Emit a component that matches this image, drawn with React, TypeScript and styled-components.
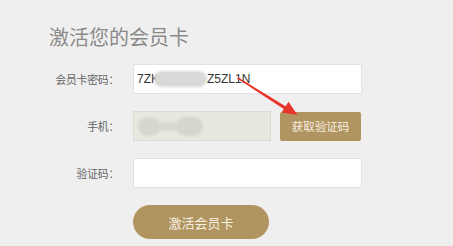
import React from "react";
import styled, { createGlobalStyle } from "styled-components";

const Global = createGlobalStyle`
  html, body { margin: 0; padding: 0; background: #efefef; }
  body { font-family: "Noto Sans CJK SC", "Liberation Sans", sans-serif; }
`;

const Page = styled.div`
  position: relative;
  width: 453px;
  height: 246px;
  box-sizing: border-box;
  padding-top: 24px;
  background: #efefef;
  overflow: hidden;
`;

const Title = styled.h1`
  margin: 0 0 14px 49px;
  font-size: 20px;
  line-height: 26px;
  font-weight: 400;
  color: #8a8a8a;
`;

const Form = styled.div`
  display: flex;
  flex-direction: column;
  gap: 17px;
`;

const Row = styled.div<{ $h: number }>`
  display: grid;
  grid-template-columns: 119px auto;
  column-gap: 14px;
  align-items: center;
  height: ${(p) => p.$h}px;
`;

const Label = styled.label`
  text-align: right;
  font-size: 10.8px;
  letter-spacing: -0.2px;
  color: #666;
  white-space: nowrap;
`;

const Field = styled.div<{ $w: number; $disabled?: boolean }>`
  position: relative;
  box-sizing: border-box;
  width: ${(p) => p.$w}px;
  height: 100%;
  display: flex;
  align-items: center;
  padding-left: 3px;
  background: ${(p) => (p.$disabled ? "#e8e7e0" : "#ffffff")};
  border: 1px solid ${(p) => (p.$disabled ? "#dcdbd4" : "#e2e2e2")};
  font-family: "Liberation Sans", Arial, sans-serif;
  font-size: 12px;
  color: #333;
  white-space: nowrap;
`;

const Blob = styled.span<{ $w: number; $h: number; $c: string; $ml?: number }>`
  display: inline-block;
  flex: none;
  width: ${(p) => p.$w}px;
  height: ${(p) => p.$h}px;
  margin-left: ${(p) => p.$ml ?? 0}px;
  background: ${(p) => p.$c};
  border-radius: ${(p) => p.$h / 2}px;
  filter: blur(1px);
`;

const PhoneRow = styled.div`
  display: flex;
  align-items: center;
  gap: 9px;
  height: 100%;
`;

const CodeButton = styled.button`
  width: 81px;
  height: 29px;
  border: none;
  border-radius: 2px;
  background: #b19561;
  color: #f7efe2;
  font-family: "Noto Sans CJK SC", sans-serif;
  font-size: 11.5px;
  padding: 0;
`;

const SubmitButton = styled.button`
  width: 136px;
  height: 34px;
  border: none;
  border-radius: 17px;
  background: #b19561;
  color: #f7efe2;
  font-family: "Noto Sans CJK SC", sans-serif;
  font-size: 13px;
  padding: 0;
`;

const ArrowLayer = styled.svg`
  position: absolute;
  left: 0;
  top: 0;
  pointer-events: none;
`;

export default function App() {
  return (
    <>
      <Global />
      <Page>
        <Title>激活您的会员卡</Title>
        <Form>
          <Row $h={30}>
            <Label>会员卡密码：</Label>
            <Field $w={229}>
              7ZK
              <Blob $w={53} $h={16} $c="#d9d9d9" $ml={-5} />
              Z5ZL1N
            </Field>
          </Row>
          <Row $h={30}>
            <Label>手机：</Label>
            <PhoneRow>
              <Field $w={138} $disabled>
                <Blob $w={22} $h={19} $c="#d6d6ce" $ml={1} />
                <Blob $w={22} $h={9} $c="#d8d8d0" $ml={-3} />
                <Blob $w={27} $h={19} $c="#d6d6ce" $ml={-3} />
              </Field>
              <CodeButton>获取验证码</CodeButton>
            </PhoneRow>
          </Row>
          <Row $h={30}>
            <Label>验证码：</Label>
            <Field $w={229} />
          </Row>
          <Row $h={34}>
            <span />
            <SubmitButton>激活会员卡</SubmitButton>
          </Row>
        </Form>
        <ArrowLayer width="453" height="246" viewBox="0 0 453 246">
          <path d="M238 77.2 L287.5 107.6 L286 110.4 L237.2 78.4 Z" fill="#e8342b" />
          <polygon points="297.5,115 281.5,112.5 288.5,101.8" fill="#e8342b" />
        </ArrowLayer>
      </Page>
    </>
  );
}
